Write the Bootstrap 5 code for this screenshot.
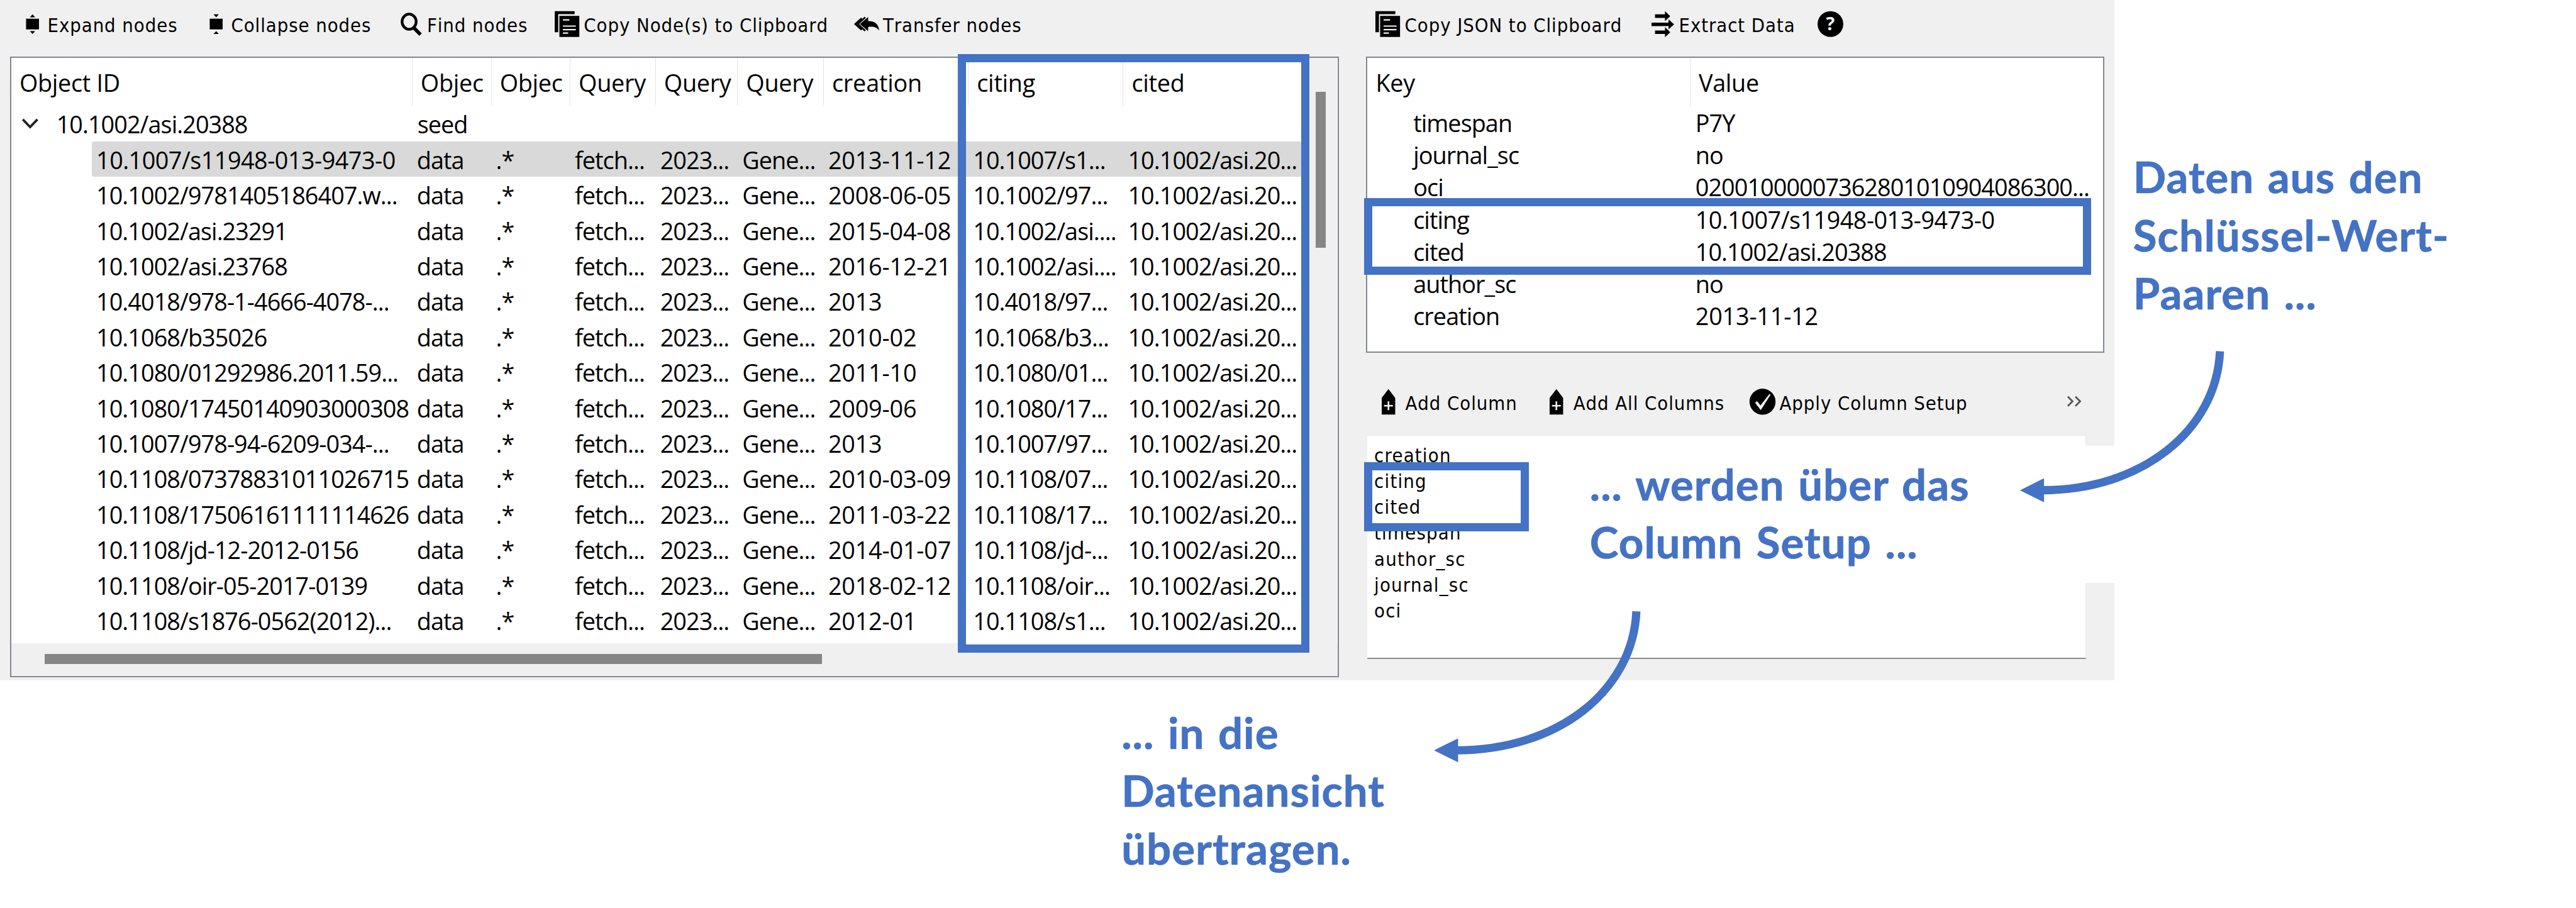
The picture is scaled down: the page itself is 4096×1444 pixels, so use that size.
<!DOCTYPE html>
<html lang="de">
<head>
<meta charset="utf-8">
<meta name="viewport" content="width=device-width, initial-scale=1">
<title>Column Setup</title>
<link href="https://cdn.jsdelivr.net/npm/bootstrap@5.3.0/dist/css/bootstrap.min.css" rel="stylesheet">
<style>
  html { font-size: 9.326px; }
  body { margin: 0; background: #fff; color: #000; overflow: hidden; }
  .stage { width: 439.2rem; height: 154.8rem; overflow: hidden; }
  svg { display: block; overflow: visible; }

  /* application window */
  .app { width: 360.5rem; height: 116rem; background: #f0f0f0; padding-left: 1.7rem; }
  .pane-left { width: 226.6rem; }
  .pane-right { width: 125.85rem; margin-left: 4.65rem; }
  .bar { display: grid; align-items: start; font: 3.3rem "DejaVu Sans Condensed", "DejaVu Sans", sans-serif; font-kerning: none; letter-spacing: .1rem; line-height: 8.6rem; white-space: nowrap; }
  .bar > div { display: flex; }
  .bar svg { height: 8.2rem; flex: none; }
  .bar-a { height: 9.6rem; padding-left: 2.7rem; grid-template-columns: 31.3rem 32.6rem 26.3rem 51rem auto; }
  .bar-b { height: 9.6rem; padding-left: 1.6rem; grid-template-columns: 47rem 28.35rem auto; }
  .bar-c { height: 14rem; padding: 4.25rem 0 0 2.65rem; grid-template-columns: 28.65rem 34.05rem 54.2rem auto; }
  .w-a { width: 3.7rem; } .w-b { width: 4.5rem; } .w-c { width: 4.95rem; } .w-d { width: 4.7rem; } .w-e { width: 4rem; } .w-f { width: 5.1rem; }

  /* tree and key/value views */
  .view { background: #fff; border: .25rem solid #828790; font: 4.05rem "Open Sans", sans-serif; letter-spacing: -.1rem; white-space: nowrap; }
  .rw { display: flex; height: 6.048rem; line-height: 6.348rem; }
  .rw > span { flex: none; padding-left: .85rem; }
  .rw > span:nth-child(1) { width: 54.55rem; padding-left: .75rem; }
  .rw > span:nth-child(2) { width: 13.5rem; }
  .rw > span:nth-child(3) { width: 13.45rem; }
  .rw > span:nth-child(4) { width: 14.55rem; }
  .rw > span:nth-child(5) { width: 14rem; }
  .rw > span:nth-child(6) { width: 14.65rem; }
  .rw > span:nth-child(7) { width: 24.7rem; letter-spacing: -.02rem; }
  .rw > span:nth-child(8) { width: 26.4rem; }
  .rw > span:nth-child(9) { width: 30.5rem; }
  .kid { margin-left: 13.75rem; }
  .picked { background: #d9d9d9; border-radius: .4rem 0 0 .4rem; }
  .picked > span:first-child { letter-spacing: -.055rem; }
  .rw.top { height: 8.2rem; line-height: 8.5rem; letter-spacing: -.03rem; }
  .rw.top > span { border-right: .2rem solid #e5e5e5; padding-left: 1.4rem; }
  .rw.top > span:nth-child(1), .rw.seed > span:nth-child(1) { width: 68.4rem; }
  .rw.top > span:last-child { border-right: 0; }
  .rw.seed { height: 6.1rem; line-height: 6.5rem; }
  .tree { height: 105.85rem; }
  .tree-body { width: 220.4rem; height: 99.85rem; overflow: hidden; }
  .vbar { background: #f0f0f0; width: 5.7rem; padding: 5.85rem 0 0 2rem; }
  .vbar div { width: 1.7rem; height: 26.6rem; background: #868686; }
  .hbar { background: #f0f0f0; height: 5.5rem; padding: 1.9rem 0 0 5.75rem; }
  .hbar div { width: 132.5rem; height: 1.65rem; background: #868686; }
  .kv { height: 50.6rem; }
  .kv .ln { display: flex; height: 5.495rem; line-height: 6.05rem; }
  .kv .ln > span { flex: none; }
  .kv .ln > span:first-child { width: 55.05rem; padding-left: 7.8rem; }
  .kv .ln > span:last-child { padding-left: .85rem; }
  .kv .hd { height: 8.2rem; line-height: 8.5rem; letter-spacing: -.03rem; }
  .kv .hd > span:first-child { padding-left: 1.4rem; border-right: .2rem solid #e5e5e5; }
  .kv .hd > span:last-child { padding-left: 1.4rem; }
  .cols { width: 122.55rem; height: 38.2rem; margin-left: .15rem; background: #fff; border: .15rem solid #e8e8e8; border-left: 0; border-bottom: .3rem solid #8c8c8c; padding: 1.15rem 0 0 1.2rem; font: 3.3rem "DejaVu Sans Condensed", "DejaVu Sans", sans-serif; letter-spacing: .13rem; }
  .cols div { line-height: 4.42rem; }

  /* annotations laid over the window */
  .talk { font: 700 7.4rem Lato, sans-serif; letter-spacing: .11rem; word-spacing: .4rem; line-height: 9.9rem; color: #4472c4; -webkit-text-stroke: .08rem #4472c4; white-space: nowrap; }
  .frame { position: absolute; border: 1.4rem solid #4472c4; }
  .f1 { left: 163.3rem; top: 9.2rem; width: 59.9rem; height: 102.1rem; }
  .f2 { left: 232.6rem; top: 33.8rem; width: 123.9rem; height: 13.1rem; }
  .f3 { left: 232.6rem; top: 78.8rem; width: 28.1rem; height: 11.8rem; }
  .note-key { margin: 25.25rem 0 0 3.2rem; }
  .note-setup { position: absolute; left: 268rem; top: 76rem; width: 92.6rem; height: 23.4rem; padding: 1.6rem 0 0 3.05rem; background: #fff; }
  .note-view { margin: 3.95rem 0 0 191.2rem; }
  .arrows { position: absolute; left: 0; top: 0; width: 439.2rem; height: 154.8rem; pointer-events: none; }
</style>
<script src="https://cdn.jsdelivr.net/npm/bootstrap@5.3.0/dist/js/bootstrap.bundle.min.js"></script>
</head>
<body>
<div class="stage position-relative">
  <div class="d-flex align-items-start">
    <main class="app d-flex align-items-start">
      <section class="pane-left">
        <div class="bar bar-a">
          <div><svg class="w-a" viewBox="0 0 37 82"><path d="M0.500 32h22v18h-22zM7 29.500l4.500-5 4.500 5zM7 53l4.500 5 4.500-5z"/></svg>Expand nodes</div>
          <div><svg class="w-a" viewBox="0 0 37 82"><path d="M0.500 32h22v18h-22zM7 24.500h9l-4.500 5zM7 58h9l-4.500-5z"/></svg>Collapse nodes</div>
          <div><svg class="w-b" viewBox="0 0 45 82"><ellipse cx="14.500" cy="37" rx="12" ry="13" fill="none" stroke="#000" stroke-width="4.600"/><path d="M22 47l12 12" stroke="#000" stroke-width="6"/></svg>Find nodes</div>
          <div><svg class="w-c" viewBox="0 0 49.500 82"><path d="M0 19h34v5H6v31H0z"/><path d="M8 27h34v36H8z"/><path d="M14 34h11M14 44.500h22M14 50.500h22M14 56.500h9" stroke="#f0f0f0" stroke-width="2.400"/></svg>Copy Node(s) to Clipboard</div>
          <div><svg class="w-c" viewBox="0 0 49.500 82"><path d="M24 29v7c11 0 17 4 19 16-5-6-10-7-19-6v7L10 41z"/><path d="M19 29.500L6.500 41 19 52.500M13 31L2 41l11 10" fill="none" stroke="#000" stroke-width="2.800"/></svg>Transfer nodes</div>
        </div>
        <div class="view tree">
          <div class="d-flex">
            <div class="tree-body">
              <div class="rw top"><span>Object ID</span><span>Objec</span><span>Objec</span><span>Query</span><span>Query</span><span>Query</span><span>creation</span><span>citing</span><span>cited</span></div>
              <div class="rw seed"><span class="d-flex"><svg style="width:6.95rem;height:6.1rem" viewBox="0 0 69.500 61"><path d="M12 23.500l12.500 13 12.500-13" fill="none" stroke="#222" stroke-width="4"/></svg>10.1002/asi.20388</span><span>seed</span></div>
              <div class="rw kid picked"><span>10.1007/s11948-013-9473-0</span><span>data</span><span>.*</span><span>fetch...</span><span>2023...</span><span>Gene...</span><span>2013-11-12</span><span>10.1007/s1...</span><span>10.1002/asi.20...</span></div>
              <div class="rw kid"><span>10.1002/9781405186407.w...</span><span>data</span><span>.*</span><span>fetch...</span><span>2023...</span><span>Gene...</span><span>2008-06-05</span><span>10.1002/97...</span><span>10.1002/asi.20...</span></div>
              <div class="rw kid"><span>10.1002/asi.23291</span><span>data</span><span>.*</span><span>fetch...</span><span>2023...</span><span>Gene...</span><span>2015-04-08</span><span>10.1002/asi....</span><span>10.1002/asi.20...</span></div>
              <div class="rw kid"><span>10.1002/asi.23768</span><span>data</span><span>.*</span><span>fetch...</span><span>2023...</span><span>Gene...</span><span>2016-12-21</span><span>10.1002/asi....</span><span>10.1002/asi.20...</span></div>
              <div class="rw kid"><span>10.4018/978-1-4666-4078-...</span><span>data</span><span>.*</span><span>fetch...</span><span>2023...</span><span>Gene...</span><span>2013</span><span>10.4018/97...</span><span>10.1002/asi.20...</span></div>
              <div class="rw kid"><span>10.1068/b35026</span><span>data</span><span>.*</span><span>fetch...</span><span>2023...</span><span>Gene...</span><span>2010-02</span><span>10.1068/b3...</span><span>10.1002/asi.20...</span></div>
              <div class="rw kid"><span>10.1080/01292986.2011.59...</span><span>data</span><span>.*</span><span>fetch...</span><span>2023...</span><span>Gene...</span><span>2011-10</span><span>10.1080/01...</span><span>10.1002/asi.20...</span></div>
              <div class="rw kid"><span>10.1080/17450140903000308</span><span>data</span><span>.*</span><span>fetch...</span><span>2023...</span><span>Gene...</span><span>2009-06</span><span>10.1080/17...</span><span>10.1002/asi.20...</span></div>
              <div class="rw kid"><span>10.1007/978-94-6209-034-...</span><span>data</span><span>.*</span><span>fetch...</span><span>2023...</span><span>Gene...</span><span>2013</span><span>10.1007/97...</span><span>10.1002/asi.20...</span></div>
              <div class="rw kid"><span>10.1108/07378831011026715</span><span>data</span><span>.*</span><span>fetch...</span><span>2023...</span><span>Gene...</span><span>2010-03-09</span><span>10.1108/07...</span><span>10.1002/asi.20...</span></div>
              <div class="rw kid"><span>10.1108/17506161111114626</span><span>data</span><span>.*</span><span>fetch...</span><span>2023...</span><span>Gene...</span><span>2011-03-22</span><span>10.1108/17...</span><span>10.1002/asi.20...</span></div>
              <div class="rw kid"><span>10.1108/jd-12-2012-0156</span><span>data</span><span>.*</span><span>fetch...</span><span>2023...</span><span>Gene...</span><span>2014-01-07</span><span>10.1108/jd-...</span><span>10.1002/asi.20...</span></div>
              <div class="rw kid"><span>10.1108/oir-05-2017-0139</span><span>data</span><span>.*</span><span>fetch...</span><span>2023...</span><span>Gene...</span><span>2018-02-12</span><span>10.1108/oir...</span><span>10.1002/asi.20...</span></div>
              <div class="rw kid"><span>10.1108/s1876-0562(2012)...</span><span>data</span><span>.*</span><span>fetch...</span><span>2023...</span><span>Gene...</span><span>2012-01</span><span>10.1108/s1...</span><span>10.1002/asi.20...</span></div>
            </div>
            <div class="vbar flex-shrink-0"><div></div></div>
          </div>
          <div class="hbar"><div></div></div>
        </div>
      </section>
      <section class="pane-right">
        <div class="bar bar-b">
          <div><svg class="w-c" viewBox="0 0 49.500 82"><path d="M0 19h34v5H6v31H0z"/><path d="M8 27h34v36H8z"/><path d="M14 34h11M14 44.500h22M14 50.500h22M14 56.500h9" stroke="#f0f0f0" stroke-width="2.400"/></svg>Copy JSON to Clipboard</div>
          <div><svg class="w-d" viewBox="0 0 47 82"><path d="M6 24.500h17V19l9 8.500-9 8.500v-5.500H6zM0 38.500h29V33l9.500 8.500L29 50v-5.500H0zM6 52h17v-5.500l9 8.500-9 8.500V58H6z"/></svg>Extract Data</div>
          <div><svg class="w-b" viewBox="0 0 45 82"><ellipse cx="22" cy="41" rx="22" ry="22"/><text x="22" y="52" text-anchor="middle" fill="#f0f0f0" font-family="Open Sans" font-weight="700" font-size="31" letter-spacing="0">?</text></svg></div>
        </div>
        <div class="view kv">
          <div class="ln hd"><span>Key</span><span>Value</span></div>
          <div class="ln"><span>timespan</span><span>P7Y</span></div>
          <div class="ln"><span>journal_sc</span><span>no</span></div>
          <div class="ln"><span>oci</span><span>02001000007362801010904086300...</span></div>
          <div class="ln"><span>citing</span><span style="letter-spacing:-.055rem">10.1007/s11948-013-9473-0</span></div>
          <div class="ln"><span>cited</span><span>10.1002/asi.20388</span></div>
          <div class="ln"><span>author_sc</span><span>no</span></div>
          <div class="ln"><span>creation</span><span style="letter-spacing:-.02rem">2013-11-12</span></div>
        </div>
        <div class="bar bar-c">
          <div><svg class="w-e" viewBox="0 0 40 82"><path d="M0 34l11.500-15L23 34v28.500H0z"/><path d="M11.500 40v15M4 47.500h15" stroke="#f0f0f0" stroke-width="2.800"/></svg>Add Column</div>
          <div><svg class="w-e" viewBox="0 0 40 82"><path d="M0 34l11.500-15L23 34v28.500H0z"/><path d="M11.500 40v15M4 47.500h15" stroke="#f0f0f0" stroke-width="2.800"/></svg>Add All Columns</div>
          <div><svg class="w-f" viewBox="0 0 51 82"><ellipse cx="22" cy="40.500" rx="22.200" ry="22.200"/><path d="M9.500 42.500l3-3 6 7.500L34 27l1.500 2L19 55z" fill="#f0f0f0"/></svg>Apply Column Setup</div>
          <div><svg style="width:2.4rem" viewBox="0 0 24 82"><path d="M1 32l8 8-8 8M14 32l8 8-8 8" fill="none" stroke="#555" stroke-width="3"/></svg></div>
        </div>
        <div class="cols">
          <div>creation</div><div>citing</div><div>cited</div><div>timespan</div><div>author_sc</div><div>journal_sc</div><div>oci</div>
        </div>
      </section>
    </main>
    <aside class="talk note-key">Daten aus den<br>Schlüssel-Wert-<br>Paaren ...</aside>
  </div>
  <div class="talk note-view">... in die<br>Datenansicht<br>übertragen.</div>

  <div class="frame f1"></div>
  <div class="frame f2"></div>
  <div class="frame f3"></div>
  <div class="talk note-setup">... werden über das<br>Column Setup ...</div>
  <svg class="arrows" viewBox="0 0 4392 1548" fill="#4472c4">
    <g fill="none" stroke="#4472c4" stroke-width="14">
      <path d="M3785 599C3779 735 3650 836 3482 836"/>
      <path d="M2790 1042.500C2784 1179 2655 1279.500 2483 1279.500"/>
    </g>
    <path d="M3444 836l41-20.500v41z"/>
    <path d="M2445 1279.500l41-20.500v41z"/>
  </svg>
</div>
</body>
</html>
